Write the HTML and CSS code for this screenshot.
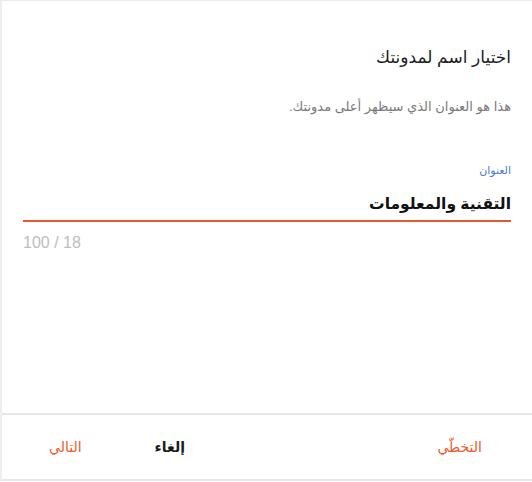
FILE: index.html
```html
<!DOCTYPE html>
<html lang="ar" dir="rtl">
<head>
<meta charset="utf-8">
<link rel="stylesheet" href="styles.css">
</head>
<body>
<div class="dialog">
  <div class="content">
    <h1 class="title">اختيار اسم لمدونتك</h1>
    <p class="subtitle">هذا هو العنوان الذي سيظهر أعلى مدونتك.</p>
    <div class="field">
      <label class="label">العنوان</label>
      <div class="input">التقنية والمعلومات</div>
      <div class="counter">18 / 100</div>
    </div>
  </div>
  <div class="footer">
    <button class="btn accent">التخطّي</button>
    <div class="group">
      <button class="btn plain">إلغاء</button>
      <button class="btn accent">التالي</button>
    </div>
  </div>
</div>
</body>
</html>
```

FILE: styles.css
```css
html, body {
  margin: 0;
  padding: 0;
  background: #ffffff;
}
body {
  width: 532px;
  height: 482px;
  overflow: hidden;
  font-family: "Liberation Sans", "DejaVu Sans", sans-serif;
}
.dialog {
  box-sizing: border-box;
  width: 532px;
  height: 481px;
  border-top: 1px solid #ebebeb;
  border-left: 2px solid #eeeeee;
  border-bottom: 2px solid #e8e8e8;
  display: flex;
  flex-direction: column;
  direction: rtl;
}
.content {
  height: 414px;
  flex: none;
  box-sizing: border-box;
  padding: 43px 21px 0 21px;
  border-bottom: 2px solid #e6e6e6;
}
.title {
  margin: 0;
  font-size: 17px;
  line-height: 28px;
  font-weight: normal;
  color: #1c1c1c;
}
.subtitle {
  margin: 25px 0 0 0;
  font-size: 13px;
  line-height: 20px;
  color: #7a7a7a;
}
.field {
  margin-top: 45px;
}
.label {
  display: block;
  font-size: 11px;
  line-height: 16px;
  color: #4a78d6;
}
.input {
  margin-top: 15px;
  font-size: 15.5px;
  line-height: 22px;
  font-weight: bold;
  color: #111111;
  padding-bottom: 5px;
  border-bottom: 2px solid #e85a2e;
}
.counter {
  margin-top: 11px;
  font-size: 16px;
  line-height: 20px;
  color: #bdbdbd;
  text-align: left;
}
.footer {
  flex: 1;
  display: flex;
  align-items: center;
  justify-content: space-between;
  padding: 0 50px 0 47px;
}
.group {
  display: flex;
  align-items: center;
  gap: 73px;
}
.btn {
  border: none;
  background: none;
  padding: 0;
  font-family: inherit;
  font-size: 14px;
  line-height: 20px;
  cursor: pointer;
}
.accent {
  color: #ec5a2c;
}
.plain {
  color: #1a1a1a;
  font-weight: bold;
}
```
